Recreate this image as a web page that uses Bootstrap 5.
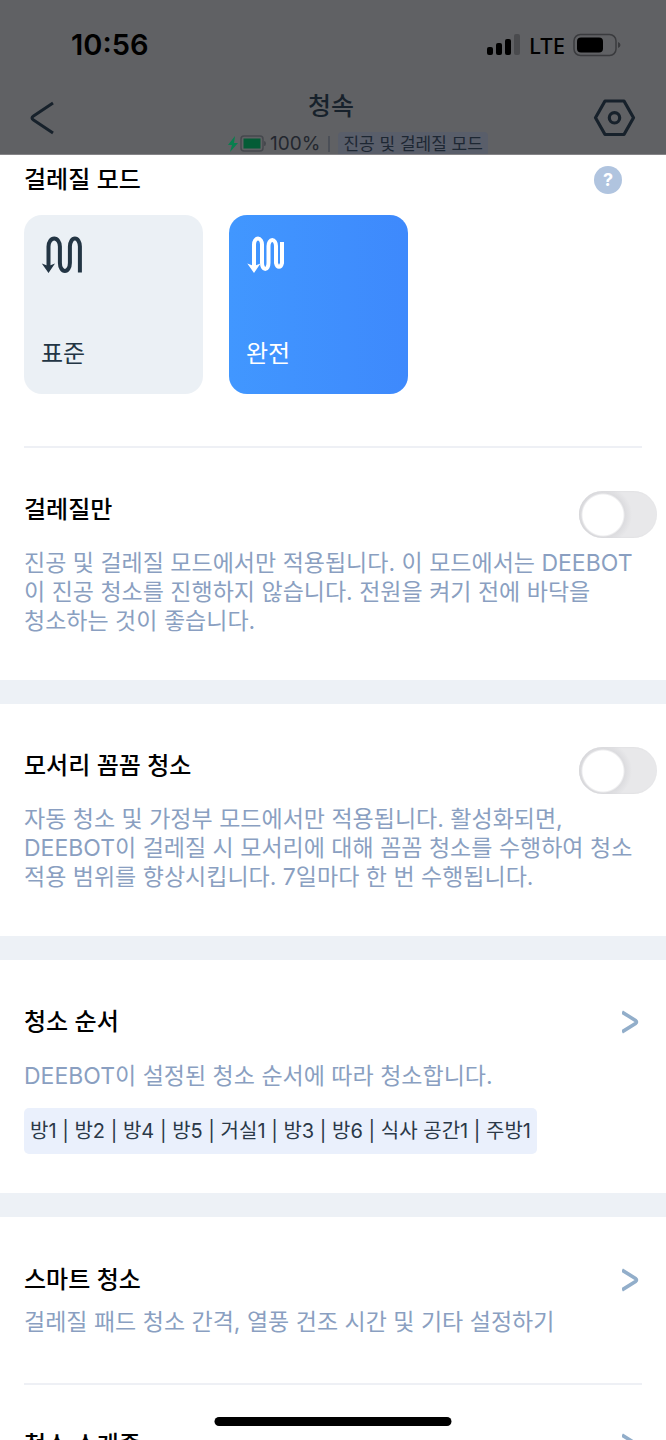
<!DOCTYPE html>
<html lang="ko">
<head>
<meta charset="utf-8">
<meta name="viewport" content="width=device-width, initial-scale=1">
<title>청속</title>
<link href="https://cdn.jsdelivr.net/npm/bootstrap@5.3.0/dist/css/bootstrap.min.css" rel="stylesheet">
<style>
  body { font-family: Inter, "Noto Sans CJK KR", sans-serif; color: #000; background: #fff; }
  .app-head { background: #606164; color: #17212b; border-bottom: 1px solid #858487; }
  .status-bar { height: 88px; padding: 2px 45px 0 71px; color: #000; }
  .clock { font-size: 29px; line-height: 36px; font-weight: 600; }
  .network { font-family: "Noto Sans", sans-serif; font-size: 22px; line-height: 36px; font-weight: 500; }
  .nav-row { height: 66px; padding: 0 28px 6px 24px; }
  .nav-side { flex: 0 0 48px; }
  .icon-btn { background: none; border: 0; padding: 0; color: inherit; line-height: 0; }
  .device-name { font-size: 25px; line-height: 36px; font-weight: 500; margin: 0; }
  .device-state { font-size: 19px; line-height: 24px; color: #23272f; padding-left: 54px; }
  .state-rule { width: 2px; height: 16px; background: #4b4f57; }
  .mode-tag { font-size: 17px; line-height: 24px; background: #595e6a; color: #1d2733; border-radius: 4px; padding: 0 5px; }
  .sheet { min-height: 0; padding-top: 7px; scrollbar-width: none; }
  .sheet::-webkit-scrollbar { display: none; }
  .block { padding: 44px 24px; }
  .block-order { padding-bottom: 39px; }
  .block-smart { padding-top: 45px; padding-bottom: 46px; }
  .block-last { padding-top: 42px; }
  .block-title { font-size: 24px; line-height: 36px; font-weight: 500; margin: 0; }
  .note { font-size: 23px; line-height: 29px; color: #8a9fc1; margin: 19px 0 0; }
  .note-near { margin-top: 10px; }
  .note-order { margin-top: 22px; }
  .band { height: 24px; background: #edf1f6; }
  .rule { height: 2px; background: #eef0f5; margin: 0 24px; }
  .rule-tiles { margin-top: 52px; }
  .help { width: 28px; height: 28px; border: 0; padding: 0; background: #b0c4df; color: #fff; font-size: 18px; line-height: 28px; font-weight: 700; margin-right: 20px; }
  .tiles { gap: 26px; margin-top: 17px; }
  .tile { width: 179px; height: 179px; border: 0; border-radius: 18px; background: #ebf0f5; color: #233544; padding: 20px 17px 22px; text-align: left; font-size: 24px; line-height: 36px; }
  .tile.on { background: linear-gradient(90deg, #4197ff, #3e89fc); color: #fff; }
  .toggle { margin-right: -15px; min-height: 0; height: 36px; padding: 0; }
  .form-switch .toggle-input { width: 78px; height: 47px; margin: -1px 0 0; float: none; border: 0; background: radial-gradient(circle at 24px 24px, #fff 20px, #dcdcdf 22px, #e8e8ea 29px); border-radius: 24px; box-shadow: inset 1px 0 2px #d5d5d8; }
  .form-switch .toggle-input:checked { background: radial-gradient(circle at 54px 24px, #fff 20px, #3e89fc 22px); }
  .order-tag { font-size: 20px; line-height: 30px; color: #2b3948; background: #eaf0fc; border-radius: 5px; padding: 8px 6px; margin-top: 17px; }
  .go { color: #92aeca; }
  .home-bar { width: 237px; height: 9px; bottom: 14px; background: #000; }
</style>
</head>
<body>
<div class="vh-100 d-flex flex-column position-relative">
  <header class="app-head flex-shrink-0 overflow-hidden">
    <div class="status-bar d-flex align-items-center justify-content-between">
      <span class="clock">10:56</span>
      <div class="d-flex align-items-center">
        <svg width="34" height="22" viewBox="0 0 34 22" aria-hidden="true">
          <rect x="0" y="13" width="6" height="8" rx="2"/><rect x="9" y="9" width="6" height="12" rx="2"/><rect x="18" y="5" width="6" height="16" rx="2"/><rect x="27" y="0" width="6" height="21" rx="2" fill="#4a4b4e"/>
        </svg>
        <span class="network ms-2">LTE</span>
        <svg class="ms-2" width="48" height="24" viewBox="0 0 48 24" aria-hidden="true">
          <rect x="1" y="1.5" width="42" height="21" rx="6.500" fill="none" stroke="#3a3b3e" stroke-width="1.500"/><rect x="4" y="4.500" width="26" height="15" rx="4"/><path d="M45 9q2.500 1 2.500 3t-2.500 3z" fill="#3a3b3e"/>
        </svg>
      </div>
    </div>
    <div class="nav-row d-flex">
      <button class="icon-btn nav-side text-start" type="button" aria-label="뒤로">
        <svg width="36" height="40" viewBox="0 0 36 40" fill="none" stroke="currentColor" stroke-width="3"><path d="M29 5 9.500 18q-3 2 0 4L29 35" stroke-linejoin="round"/></svg>
      </button>
      <div class="flex-fill d-flex flex-column align-items-center">
        <h1 class="device-name">청속</h1>
        <div class="device-state d-flex align-items-center mt-2">
          <svg width="38" height="20" viewBox="0 0 38 20" aria-hidden="true">
            <path d="M7 2 0 11h4l-2 7 8-9H6z" fill="#087f4e"/><rect x="13" y="2" width="22" height="15" rx="3" fill="none" stroke="#45484d" stroke-width="1.500"/><rect x="15.500" y="4.500" width="17" height="10" fill="#045c36"/><path d="M36 7q2 0 2 2.500T36 12z" fill="#45484d"/>
          </svg>
          <span class="ms-1">100%</span>
          <span class="state-rule mx-2"></span>
          <span class="mode-tag">진공 및 걸레질 모드</span>
        </div>
      </div>
      <button class="icon-btn nav-side" type="button" aria-label="설정">
        <svg width="48" height="60" viewBox="0 0 48 60" fill="none" stroke="currentColor" stroke-width="3.200" stroke-linejoin="round"><path d="M15 13H34L43.500 29.800 34 46.500H15L5.500 29.800Z"/><circle cx="24.500" cy="29.800" r="5.200"/></svg>
      </button>
    </div>
  </header>

  <main class="sheet flex-fill overflow-auto">
    <section class="px-4">
      <div class="d-flex align-items-center justify-content-between">
        <h2 class="block-title">걸레질 모드</h2>
        <button class="help rounded-circle text-center" type="button">?</button>
      </div>
      <div class="tiles d-flex">
        <button class="tile d-flex flex-column justify-content-between" type="button" aria-pressed="false">
          <svg width="42" height="40" viewBox="0 0 42 40" fill="none" stroke="currentColor" stroke-width="4"><path d="M7.500 33V11.500a5.700 8 0 0 1 11.400 0V28a5 8 0 0 0 10 0V11.500a5 8 0 0 1 10 0V37.500"/><path d="M.8 28.500 7.500 31l6.500-2.500-6.500 9.500z" fill="currentColor" stroke="none"/></svg>
          <span>표준</span>
        </button>
        <button class="tile on d-flex flex-column justify-content-between" type="button" aria-pressed="true">
          <svg width="42" height="40" viewBox="0 0 42 40" fill="none" stroke="currentColor" stroke-width="4"><path d="M8 33V9.500a4 6 0 0 1 8 0V28a3.250 6 0 0 0 6.500 0V11a3.750 6 0 0 1 7.500 0V28a3.250 6 0 0 0 6 0V7"/><path d="M1.300 28.500 8 31l6.500-2.500L8 38z" fill="currentColor" stroke="none"/></svg>
          <span>완전</span>
        </button>
      </div>
    </section>
    <div class="rule rule-tiles"></div>

    <section class="block">
      <div class="d-flex justify-content-between">
        <h2 class="block-title"><label for="mopOnly">걸레질만</label></h2>
        <div class="toggle form-check form-switch"><input class="toggle-input form-check-input" type="checkbox" role="switch" id="mopOnly"></div>
      </div>
      <p class="note">진공 및 걸레질 모드에서만 적용됩니다. 이 모드에서는 DEEBOT<br>이 진공 청소를 진행하지 않습니다. 전원을 켜기 전에 바닥을<br>청소하는 것이 좋습니다.</p>
    </section>
    <div class="band"></div>

    <section class="block">
      <div class="d-flex justify-content-between">
        <h2 class="block-title"><label for="edgeDeep">모서리 꼼꼼 청소</label></h2>
        <div class="toggle form-check form-switch"><input class="toggle-input form-check-input" type="checkbox" role="switch" id="edgeDeep"></div>
      </div>
      <p class="note">자동 청소 및 가정부 모드에서만 적용됩니다. 활성화되면,<br>DEEBOT이 걸레질 시 모서리에 대해 꼼꼼 청소를 수행하여 청소<br>적용 범위를 향상시킵니다. 7일마다 한 번 수행됩니다.</p>
    </section>
    <div class="band"></div>

    <section class="block block-order">
      <a class="d-flex align-items-center justify-content-between text-reset text-decoration-none" href="#order">
        <h2 class="block-title">청소 순서</h2>
        <svg class="go" width="20" height="24" viewBox="0 0 20 24" fill="none" stroke="currentColor" stroke-width="3.600" aria-hidden="true"><path d="M0 2 13.500 10.500q2 1.500 0 3L0 22"/></svg>
      </a>
      <p class="note note-order">DEEBOT이 설정된 청소 순서에 따라 청소합니다.</p>
      <div class="order-tag d-inline-block align-top">방1 | 방2 | 방4 | 방5 | 거실1 | 방3 | 방6 | 식사 공간1 | 주방1</div>
    </section>
    <div class="band"></div>

    <section class="block block-smart">
      <a class="d-flex align-items-center justify-content-between text-reset text-decoration-none" href="#smart">
        <h2 class="block-title">스마트 청소</h2>
        <svg class="go" width="20" height="24" viewBox="0 0 20 24" fill="none" stroke="currentColor" stroke-width="3.600" aria-hidden="true"><path d="M0 2 13.500 10.500q2 1.500 0 3L0 22"/></svg>
      </a>
      <p class="note note-near">걸레질 패드 청소 간격, 열풍 건조 시간 및 기타 설정하기</p>
    </section>
    <div class="rule"></div>

    <section class="block block-last">
      <a class="d-flex align-items-center justify-content-between text-reset text-decoration-none" href="#intro">
        <h2 class="block-title">청소 소개중</h2>
        <svg class="go" width="20" height="24" viewBox="0 0 20 24" fill="none" stroke="currentColor" stroke-width="3.600" aria-hidden="true"><path d="M0 2 13.500 10.500q2 1.500 0 3L0 22"/></svg>
      </a>
    </section>
  </main>
  <div class="home-bar position-absolute start-50 translate-middle-x rounded-pill"></div>
</div>
<script src="https://cdn.jsdelivr.net/npm/bootstrap@5.3.0/dist/js/bootstrap.bundle.min.js"></script>
</body>
</html>
